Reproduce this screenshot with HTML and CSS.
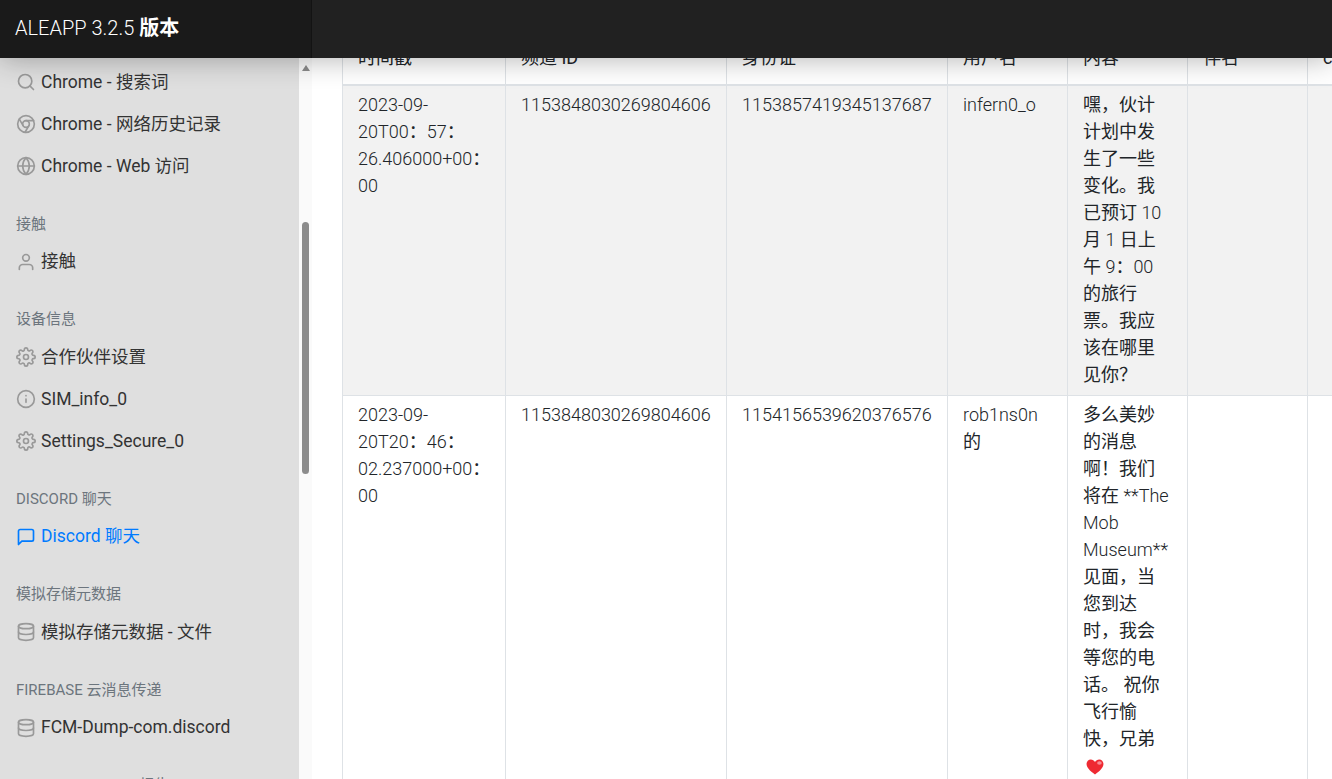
FILE: index.html
```html
<!DOCTYPE html>
<html lang="zh">
<head>
<meta charset="utf-8">
<title>ALEAPP</title>
<link rel="stylesheet" href="styles.css">
</head>
<body>
<header class="navbar">
  <div class="brand">ALEAPP 3.2.5 <b class="brand-zh">版本</b></div>
</header>
<div class="layout">
  <nav class="sidebar">
    <ul class="menu first">
      <li class="item"><svg class="ico" viewBox="0 0 24 24"><circle cx="11" cy="11" r="8"/><line x1="21" y1="21" x2="16.65" y2="16.65"/></svg>Chrome - 搜索词</li>
      <li class="item"><svg class="ico" viewBox="0 0 24 24"><circle cx="12" cy="12" r="10"/><circle cx="12" cy="12" r="4"/><line x1="21.17" y1="8" x2="12" y2="8"/><line x1="3.95" y1="6.06" x2="8.54" y2="14"/><line x1="10.88" y1="21.94" x2="15.46" y2="14"/></svg>Chrome - 网络历史记录</li>
      <li class="item"><svg class="ico" viewBox="0 0 24 24"><circle cx="12" cy="12" r="10"/><line x1="2" y1="12" x2="22" y2="12"/><path d="M12 2a15.3 15.3 0 0 1 4 10 15.3 15.3 0 0 1-4 10 15.3 15.3 0 0 1-4-10 15.3 15.3 0 0 1 4-10z"/></svg>Chrome - Web 访问</li>
    </ul>
    <h6 class="heading">接触</h6>
    <ul class="menu">
      <li class="item"><svg class="ico" viewBox="0 0 24 24"><path d="M20 21v-2a4 4 0 0 0-4-4H8a4 4 0 0 0-4 4v2"/><circle cx="12" cy="7" r="4"/></svg>接触</li>
    </ul>
    <h6 class="heading">设备信息</h6>
    <ul class="menu">
      <li class="item"><svg class="ico" viewBox="0 0 24 24"><circle cx="12" cy="12" r="3"/><path d="M19.4 15a1.65 1.65 0 0 0 .33 1.82l.06.06a2 2 0 0 1 0 2.83 2 2 0 0 1-2.83 0l-.06-.06a1.65 1.65 0 0 0-1.82-.33 1.65 1.65 0 0 0-1 1.51V21a2 2 0 0 1-2 2 2 2 0 0 1-2-2v-.09A1.65 1.65 0 0 0 9 19.4a1.65 1.65 0 0 0-1.82.33l-.06.06a2 2 0 0 1-2.83 0 2 2 0 0 1 0-2.83l.06-.06a1.65 1.65 0 0 0 .33-1.82 1.65 1.65 0 0 0-1.51-1H3a2 2 0 0 1-2-2 2 2 0 0 1 2-2h.09A1.65 1.65 0 0 0 4.6 9a1.65 1.65 0 0 0-.33-1.82l-.06-.06a2 2 0 0 1 0-2.83 2 2 0 0 1 2.83 0l.06.06a1.65 1.65 0 0 0 1.82.33H9a1.65 1.65 0 0 0 1-1.51V3a2 2 0 0 1 2-2 2 2 0 0 1 2 2v.09a1.65 1.65 0 0 0 1 1.51 1.65 1.65 0 0 0 1.82-.33l.06-.06a2 2 0 0 1 2.83 0 2 2 0 0 1 0 2.83l-.06.06a1.65 1.65 0 0 0-.33 1.82V9a1.65 1.65 0 0 0 1.51 1H21a2 2 0 0 1 2 2 2 2 0 0 1-2 2h-.09a1.65 1.65 0 0 0-1.51 1z"/></svg>合作伙伴设置</li>
      <li class="item"><svg class="ico" viewBox="0 0 24 24"><circle cx="12" cy="12" r="10"/><line x1="12" y1="16" x2="12" y2="12"/><line x1="12" y1="8" x2="12.01" y2="8"/></svg>SIM_info_0</li>
      <li class="item"><svg class="ico" viewBox="0 0 24 24"><circle cx="12" cy="12" r="3"/><path d="M19.4 15a1.65 1.65 0 0 0 .33 1.82l.06.06a2 2 0 0 1 0 2.83 2 2 0 0 1-2.83 0l-.06-.06a1.65 1.65 0 0 0-1.82-.33 1.65 1.65 0 0 0-1 1.51V21a2 2 0 0 1-2 2 2 2 0 0 1-2-2v-.09A1.65 1.65 0 0 0 9 19.4a1.65 1.65 0 0 0-1.82.33l-.06.06a2 2 0 0 1-2.83 0 2 2 0 0 1 0-2.83l.06-.06a1.65 1.65 0 0 0 .33-1.82 1.65 1.65 0 0 0-1.51-1H3a2 2 0 0 1-2-2 2 2 0 0 1 2-2h.09A1.65 1.65 0 0 0 4.6 9a1.65 1.65 0 0 0-.33-1.82l-.06-.06a2 2 0 0 1 0-2.83 2 2 0 0 1 2.83 0l.06.06a1.65 1.65 0 0 0 1.82.33H9a1.65 1.65 0 0 0 1-1.51V3a2 2 0 0 1 2-2 2 2 0 0 1 2 2v.09a1.65 1.65 0 0 0 1 1.51 1.65 1.65 0 0 0 1.82-.33l.06-.06a2 2 0 0 1 2.83 0 2 2 0 0 1 0 2.83l-.06.06a1.65 1.65 0 0 0-.33 1.82V9a1.65 1.65 0 0 0 1.51 1H21a2 2 0 0 1 2 2 2 2 0 0 1-2 2h-.09a1.65 1.65 0 0 0-1.51 1z"/></svg>Settings_Secure_0</li>
    </ul>
    <h6 class="heading">DISCORD 聊天</h6>
    <ul class="menu">
      <li class="item active"><svg class="ico" viewBox="0 0 24 24"><path d="M21 15a2 2 0 0 1-2 2H7l-4 4V5a2 2 0 0 1 2-2h14a2 2 0 0 1 2 2z"/></svg>Discord 聊天</li>
    </ul>
    <h6 class="heading">模拟存储元数据</h6>
    <ul class="menu">
      <li class="item"><svg class="ico" viewBox="0 0 24 24"><ellipse cx="12" cy="5" rx="9" ry="3"/><path d="M21 12c0 1.66-4 3-9 3s-9-1.34-9-3"/><path d="M3 5v14c0 1.66 4 3 9 3s9-1.34 9-3V5"/></svg>模拟存储元数据 - 文件</li>
    </ul>
    <h6 class="heading">FIREBASE 云消息传递</h6>
    <ul class="menu">
      <li class="item"><svg class="ico" viewBox="0 0 24 24"><ellipse cx="12" cy="5" rx="9" ry="3"/><path d="M21 12c0 1.66-4 3-9 3s-9-1.34-9-3"/><path d="M3 5v14c0 1.66 4 3 9 3s9-1.34 9-3V5"/></svg>FCM-Dump-com.discord</li>
    </ul>
    <h6 class="heading">GOOGLE PHOTOS 报告</h6>
  </nav>
  <div class="scrollbar"><span class="arrow"></span><span class="thumb"></span></div>
  <main class="main">
    <table class="table">
      <colgroup>
        <col class="c1"><col class="c2"><col class="c3"><col class="c4"><col class="c5"><col class="c6"><col class="c7">
      </colgroup>
      <thead>
        <tr><th>时间戳</th><th>频道 ID</th><th>身份证</th><th>用户名</th><th>内容</th><th>伴名</th><th>c</th></tr>
      </thead>
      <tbody>
        <tr class="odd">
          <td>2023-09-<br>20T00<i class="zh">：</i>57<i class="zh">：</i><br>26.406000+00<i class="zh">：</i><br>00</td>
          <td>1153848030269804606</td>
          <td>1153857419345137687</td>
          <td>infern0_o</td>
          <td><i class="zh">嘿，伙计<br>计划中发<br>生了一些<br>变化。我<br>已预订</i> 10<br><i class="zh">月</i> 1 <i class="zh">日上<br>午</i> 9<i class="zh">：</i>00<br><i class="zh">的旅行<br>票。我应<br>该在哪里<br>见你？</i></td>
          <td></td><td></td>
        </tr>
        <tr>
          <td>2023-09-<br>20T20<i class="zh">：</i>46<i class="zh">：</i><br>02.237000+00<i class="zh">：</i><br>00</td>
          <td>1153848030269804606</td>
          <td>1154156539620376576</td>
          <td>rob1ns0n<br><i class="zh">的</i></td>
          <td><i class="zh">多么美妙<br>的消息<br>啊！我们<br>将在</i> **The<br>Mob<br>Museum**<br><i class="zh">见面，当<br>您到达<br>时，我会<br>等您的电<br>话。 祝你<br>飞行愉<br>快，兄弟</i><br><svg class="heart" viewBox="0 0 20 18"><path class="heart-body" d="M10 17.500C4 13 .5 9.600.5 5.600.5 2.800 2.700.6 5.300.6 7.200.6 9 1.600 10 3.400 11 1.600 12.800.6 14.700.6c2.600 0 4.800 2.200 4.800 5 0 4-3.500 7.400-9.500 11.900z"/><ellipse class="heart-shine" cx="15" cy="4.500" rx="2.600" ry="2"/></svg></td>
          <td></td><td></td>
        </tr>
      </tbody>
    </table>
  </main>
</div>
</body>
</html>
```
FILE: styles.css
```css
* { box-sizing: border-box; }
html, body { margin: 0; height: 100%; overflow: hidden; }
body {
  font-family: Roboto, "Noto Sans CJK SC", sans-serif;
  font-size: 18px;
  line-height: 27px;
  font-weight: 300;
  color: #212529;
  background: #fff;
}
.navbar {
  position: absolute;
  top: 0; left: 0; right: 0;
  z-index: 5;
  height: 58px;
  background: #212121;
  box-shadow: 0 0 30px rgba(0,0,0,.32);
}
.brand {
  width: 312px;
  height: 58px;
  padding: 15px 15px;
  color: #fff;
  font-size: 20px;
  background: #1a1a1a;
  box-shadow: inset -1px 0 0 rgba(0,0,0,.25);
}
.brand-zh { font-weight: 700; }
.zh { font-style: normal; font-weight: 400; }
.layout { display: flex; height: 779px; overflow: hidden; }
.sidebar { width: 299px; flex: none; background: #dfdfdf; padding-top: 58px; overflow: hidden; }
.menu { list-style: none; margin: 0; padding: 0; }
.first { padding-top: 3px; }
.item {
  display: flex;
  align-items: center;
  height: 42px;
  padding-left: 16px;
  font-size: 17.5px;
  font-weight: 400;
  color: #333;
  white-space: nowrap;
}
.ico {
  width: 20px; height: 20px;
  margin: 0 5px 0 0;
  flex: none;
  fill: none;
  stroke: #999;
  stroke-width: 2;
  stroke-linecap: round;
  stroke-linejoin: round;
}
.active { color: #007bff; }
.active .ico { stroke: #007bff; }
.heading {
  margin: 0;
  padding: 25.5px 16px 5.5px;
  font-size: 15px;
  line-height: 22.5px;
  font-weight: 400;
  color: #6c757d;
  white-space: nowrap;
}
.scrollbar {
  width: 13px;
  flex: none;
  padding-top: 58px;
  background: #fafafa;
  display: flex;
  flex-direction: column;
  align-items: center;
}
.arrow {
  margin-top: 7px;
  border-left: 4px solid transparent;
  border-right: 4px solid transparent;
  border-bottom: 6px solid #8a8a8a;
}
.thumb {
  width: 7px;
  height: 252px;
  margin-top: 151px;
  background: #8c8c8c;
  border-radius: 4px;
}
.main { flex: 1; min-width: 0; padding: 12px 0 0 30px; overflow: hidden; }
.table {
  border-collapse: collapse;
  table-layout: fixed;
  width: 1085px;
  color: #212529;
}
.c1 { width: 163px; }
.c2, .c3 { width: 221px; }
.c4, .c5, .c6, .c7 { width: 120px; }
.table th, .table td {
  border: 1px solid #dee2e6;
  padding: 5px 15px 7px;
  vertical-align: top;
  text-align: left;
  white-space: nowrap;
}
.table th {
  position: relative;
  padding: 31px 15px 13px;
  font-weight: 400;
  border-bottom-width: 2px;
}
.table th::after {
  content: "";
  position: absolute;
  right: 25px;
  bottom: 26px;
  border-left: 2px solid transparent;
  border-right: 2px solid transparent;
  border-top: 2px solid #bbb;
}
.odd { background: #f2f2f2; }
.heart { width: 18px; height: 16px; margin-left: 3px; vertical-align: -3px; }
.heart-body { fill: #ee2a32; }
.heart-shine { fill: #f98a94; }
```
